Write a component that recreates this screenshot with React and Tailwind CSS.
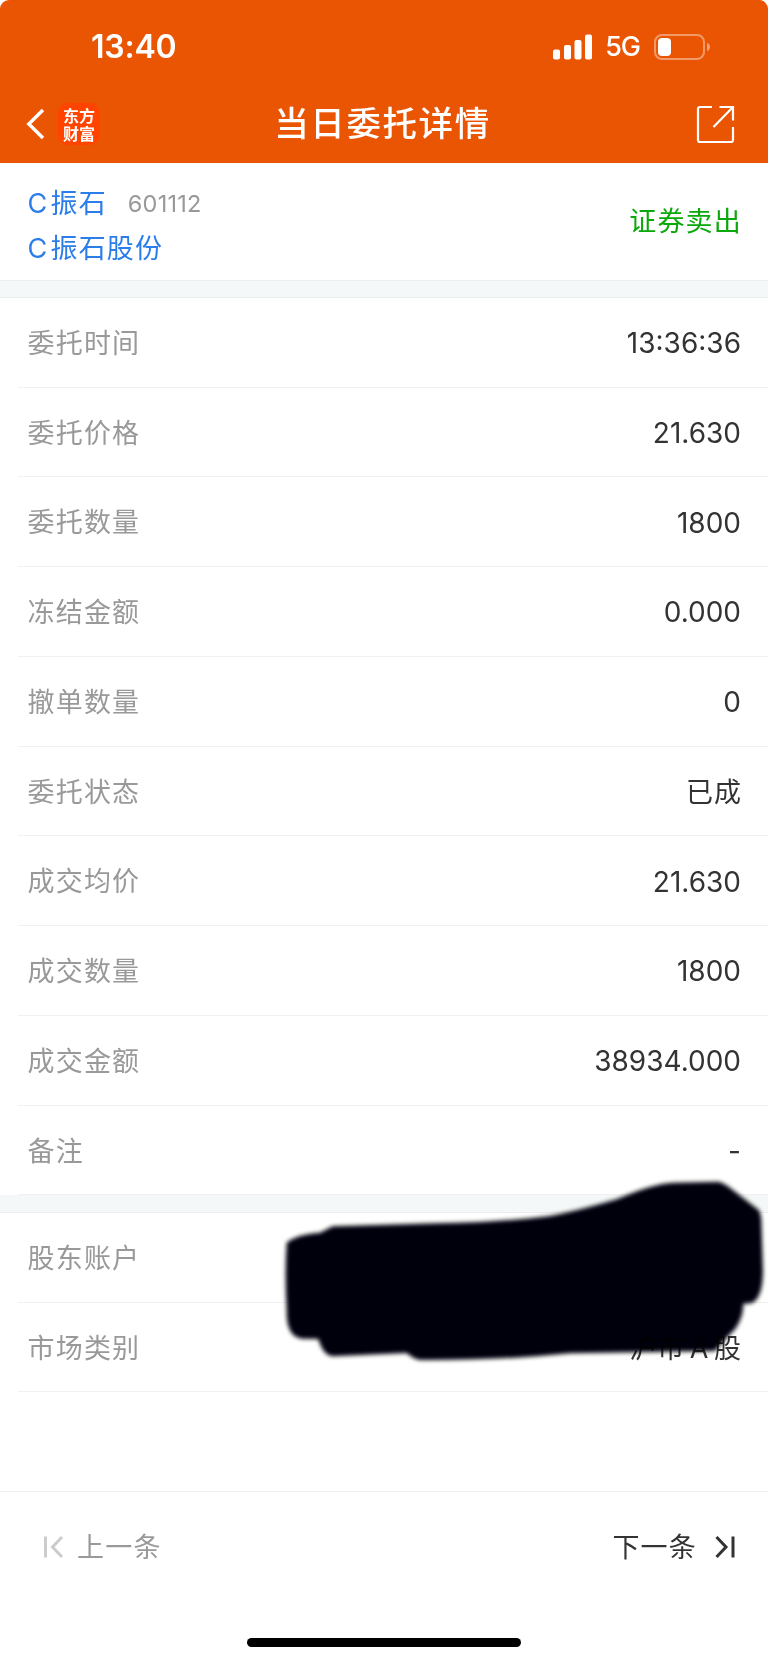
import React from 'react';

const orderRows = [
  { label: '委托时间', value: '13:36:36' },
  { label: '委托价格', value: '21.630' },
  { label: '委托数量', value: '1800' },
  { label: '冻结金额', value: '0.000' },
  { label: '撤单数量', value: '0' },
  { label: '委托状态', value: '已成' },
  { label: '成交均价', value: '21.630' },
  { label: '成交数量', value: '1800' },
  { label: '成交金额', value: '38934.000' },
  { label: '备注', value: '-' },
];

const accountRows = [
  { label: '股东账户', value: '' },
  { label: '市场类别', value: '沪市 A 股' },
];

const isChinese = (text) => /[\u4e00-\u9fff]/.test(text);

const StatusBar = () => (
  <div className="flex h-[93px] items-center justify-between pl-[91px] pr-[57px]">
    <span className="text-[32px] font-semibold leading-none tracking-[-0.2px]">13:40</span>
    <div className="flex items-center">
      <svg width="40" height="26" viewBox="0 0 40 26" fill="currentColor">
        <rect x="0" y="15.5" width="7" height="10" rx="2" />
        <rect x="11" y="11" width="7" height="14.5" rx="2" />
        <rect x="21.5" y="6" width="7" height="19.5" rx="2" />
        <rect x="32" y="0.5" width="7" height="25" rx="2" />
      </svg>
      <span className="ml-[12px] text-[27px] font-medium leading-none tracking-[-1px]">5G</span>
      <svg className="ml-[14px]" width="57" height="28" viewBox="0 0 57 28" fill="none">
        <rect x="1" y="2" width="49" height="24" rx="7" stroke="white" strokeOpacity="0.4" strokeWidth="2" />
        <rect x="4" y="5" width="13" height="18" rx="4" fill="white" />
        <path d="M53 10c4 1 4 7 0 8z" fill="white" fillOpacity="0.45" />
      </svg>
    </div>
  </div>
);

const TitleBar = () => (
  <div className="grid h-[62px] grid-cols-[1fr_auto_1fr] items-center pl-[26px] pr-[32px]">
    <div className="flex items-center">
      <svg width="19" height="32" viewBox="0 0 19 32" fill="none" stroke="white" strokeWidth="3.4">
        <path d="M17 2L2.8 16L17 30" strokeLinejoin="miter" />
      </svg>
      <div className="ml-[13px] flex h-[42px] w-[42px] items-center justify-center rounded-[10px] bg-[#ff4400]">
        <span className="w-[32px] break-all font-['Noto_Sans_CJK_SC',sans-serif] text-[16px] font-bold leading-[18px]">东方财富</span>
      </div>
    </div>
    <h1 className="ml-[3px] text-[34.500px] font-medium leading-none tracking-[1.6px]">当日委托详情</h1>
    <svg className="mt-[2px] justify-self-end" width="40" height="40" viewBox="0 0 40 40" fill="none" stroke="white" strokeWidth="2.2">
      <path d="M16 2H4a2 2 0 0 0-2 2V35a2 2 0 0 0 2 2H35a2 2 0 0 0 2-2V22" />
      <path d="M23.500 2H37V15.500M37 2L17.500 22" />
    </svg>
  </div>
);

const Row = ({ label, value }) => (
  <div className="ml-[18px] flex h-[89.750px] items-center justify-between border-b border-[#f0f0f0] pl-[9.500px] pr-[27px]">
    <span className="pt-[4px] text-[27px] tracking-[1.2px] text-[#999]">{label}</span>
    {isChinese(value) ? (
      <span className="mr-[-1px] pt-[4px] text-[27px] tracking-[1px] text-[#333] [word-spacing:-4px]">{value}</span>
    ) : (
      <span className="pt-[2px] text-[28px] text-[#333]">{value}</span>
    )}
  </div>
);

const Scribble = () => (
  <svg
    className="pointer-events-none absolute right-0 top-[-62px] h-[250px] w-[498px] mix-blend-multiply"
    viewBox="0 0 1494 750"
  >
    <defs>
      <filter id="soft" x="-5%" y="-5%" width="110%" height="110%">
        <feGaussianBlur stdDeviation="6.5" />
      </filter>
    </defs>
    <path
      filter="url(#soft)"
      fill="#01000e"
      d="M50 275Q80 250 150 245L188 226L500 217Q700 213 835 196Q910 183 1040 145Q1150 97 1210 95L1345 92Q1360 95 1378 109L1465 176Q1472 184 1474 205L1479 360Q1478 445 1443 457L1420 458Q1420 500 1395 535Q1370 560 1335 600L900 607Q700 628 450 627Q432 625 410 606L190 616Q160 615 145 564L95 563Q48 558 50 475Q44 370 50 275Z"
    />
  </svg>
);

const App = () => {
  return (
    <div className="flex h-[1662px] w-[768px] flex-col overflow-hidden bg-white font-[Inter,'Noto_Sans_CJK_SC',sans-serif]">
      <header className="h-[163.300px] shrink-0 rounded-t-[9px] bg-[#ea5504] text-white">
        <StatusBar />
        <TitleBar />
      </header>

      <section className="flex h-[117px] shrink-0 items-center justify-between pl-[27.500px] pr-[26px]">
        <div className="pt-[8px] text-[27px] leading-[45px] tracking-[1.2px] text-[#2b7de9]">
          <div className="flex items-center">
            <span>C<span className="ml-[2px]">振石</span></span>
            <span className="ml-[21px] text-[23.500px] tracking-[0.2px] text-[#999]">601112</span>
          </div>
          <div>C<span className="ml-[2px]">振石股份</span></div>
        </div>
        <span className="pt-[1px] text-[27px] tracking-[1.2px] text-[#0aa80a]">证券卖出</span>
      </section>

      <div className="h-[17.500px] shrink-0 border-y border-[#ebeef0] bg-[#f4f8f9]" />

      <section className="shrink-0">
        {orderRows.map((row) => (
          <Row key={row.label} {...row} />
        ))}
      </section>

      <div className="h-[17.500px] shrink-0 border-b border-[#ebeef0] bg-[#f4f8f9]" />

      <section className="relative shrink-0">
        {accountRows.map((row) => (
          <Row key={row.label} {...row} />
        ))}
        <Scribble />
      </section>

      <footer className="mt-auto flex h-[171px] shrink-0 flex-col justify-between border-t border-[#f0f0f0]">
        <div className="flex h-[110px] items-center justify-between pl-[43px] pr-[32px]">
          <button className="flex items-center text-[27px] tracking-[1.2px] text-[#999]">
            <svg width="22" height="24" viewBox="0 0 22 24" fill="none" stroke="#ccc" strokeWidth="3">
              <path d="M2.500 1.500V22.500M19 2L9.500 12L19 22" />
            </svg>
            <span className="ml-[12px] pt-[2px]">上一条</span>
          </button>
          <button className="flex items-center text-[27px] tracking-[1.2px] text-[#333]">
            <span className="pt-[2px]">下一条</span>
            <svg className="ml-[17px]" width="22" height="24" viewBox="0 0 22 24" fill="none" stroke="currentColor" strokeWidth="3">
              <path d="M19 1.500V22.500M2.500 2L12 12L2.500 22" />
            </svg>
          </button>
        </div>
        <div className="mx-auto mb-[15px] h-[9px] w-[274px] rounded-full bg-black" />
      </footer>
    </div>
  );
};

export default App;
